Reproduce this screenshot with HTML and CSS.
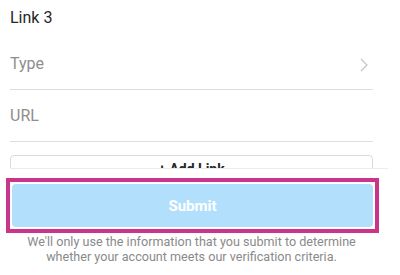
FILE: index.html
```html
<!DOCTYPE html>
<html>
<head>
<meta charset="utf-8">
<link rel="stylesheet" href="styles.css">
</head>
<body>
<main class="content">
  <div class="section-title">Link 3</div>
  <div class="field">
    <span class="placeholder">Type</span>
    <svg class="chevron" width="8" height="14" viewBox="0 0 8 14"><polyline points="1,1 7,7 1,13" fill="none" stroke="#c4c4c4" stroke-width="1.2"/></svg>
  </div>
  <div class="field">
    <span class="placeholder">URL</span>
  </div>
  <button class="add-link">+ Add Link</button>
</main>
<footer class="footer">
  <div class="footer-rule"></div>
  <div class="highlight">
    <button class="submit">Submit</button>
  </div>
  <p class="note">We'll only use the information that you submit to determine whether your account meets our verification criteria.</p>
</footer>
</body>
</html>
```
FILE: styles.css
```css
html, body {
  margin: 0;
  padding: 0;
  background: #ffffff;
  font-family: Roboto, "Noto Sans", sans-serif;
  overflow: hidden;
}

.content {
  padding: 0 27px 0 10px;
}

.section-title {
  padding: 8px 0 10px;
  font-size: 16px;
  line-height: 20px;
  color: #262626;
}

.field {
  display: flex;
  align-items: center;
  justify-content: space-between;
  padding: 16px 5px 15px 0;
  border-bottom: 1px solid #dedede;
  line-height: 20px;
  font-size: 16px;
}

.placeholder {
  color: #8e8e8e;
}

.chevron {
  display: block;
  margin-top: 2px;
}

.add-link {
  display: block;
  width: 100%;
  margin-top: 13px;
  padding: 4px 8px 10px;
  border: 1px solid #dbdbdb;
  border-radius: 4px;
  background: #ffffff;
  font-family: Roboto, sans-serif;
  font-weight: 700;
  font-size: 14px;
  line-height: 18px;
  color: #262626;
}

.footer {
  position: fixed;
  top: 168px;
  left: 0;
  right: 0;
  bottom: 0;
  background: #ffffff;
}

.footer-rule {
  margin: 0 12px 0 10px;
  border-top: 1px solid #ececec;
}

.highlight {
  margin: 9px 21px 0 6px;
  border: 4px solid #c9358b;
  padding: 2px;
}

.submit {
  display: block;
  width: 100%;
  height: 43px;
  border: none;
  border-radius: 4px;
  background: #b2dffc;
  color: #ffffff;
  font-family: Roboto, sans-serif;
  font-weight: 700;
  font-size: 15px;
}

.note {
  margin: 1px 27px 0 10px;
  text-align: center;
  font-size: 12.6px;
  line-height: 15px;
  color: #8a8a8a;
}
```
